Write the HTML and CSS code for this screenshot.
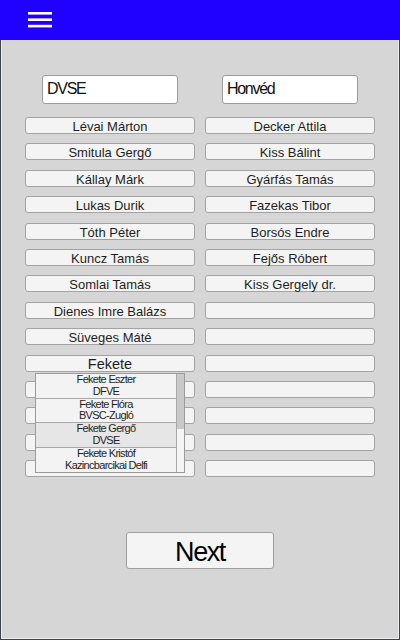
FILE: index.html
```html
<!DOCTYPE html>
<html lang="hu">
<head>
<meta charset="utf-8">
<link rel="stylesheet" href="styles.css">
</head>
<body>
<div class="app">
  <header class="topbar">
    <svg class="burger" width="24" height="16" viewBox="0 0 24 16"><rect x="0" y="0" width="24" height="2.6" fill="#fff"/><rect x="0" y="6.4" width="24" height="2.6" fill="#fff"/><rect x="0" y="12.8" width="24" height="2.6" fill="#fff"/></svg>
  </header>
  <main class="panel">
    <div class="teams">
      <div class="team">DVSE</div>
      <div class="team">Honvéd</div>
    </div>
    <div class="grid">
      <div class="cell">Lévai Márton</div><div class="cell">Decker Attila</div>
      <div class="cell">Smitula Gergő</div><div class="cell">Kiss Bálint</div>
      <div class="cell">Kállay Márk</div><div class="cell">Gyárfás Tamás</div>
      <div class="cell">Lukas Durik</div><div class="cell">Fazekas Tibor</div>
      <div class="cell">Tóth Péter</div><div class="cell">Borsós Endre</div>
      <div class="cell">Kuncz Tamás</div><div class="cell">Fejős Róbert</div>
      <div class="cell">Somlai Tamás</div><div class="cell">Kiss Gergely dr.</div>
      <div class="cell">Dienes Imre Balázs</div><div class="cell"></div>
      <div class="cell">Süveges Máté</div><div class="cell"></div>
      <div class="cell search">Fekete</div><div class="cell"></div>
      <div class="cell"></div><div class="cell"></div>
      <div class="cell"></div><div class="cell"></div>
      <div class="cell"></div><div class="cell"></div>
      <div class="cell"></div><div class="cell"></div>
    </div>
    <div class="dropdown">
      <div class="items">
        <div class="item"><span>Fekete Eszter</span><span>DFVE</span></div>
        <div class="item"><span>Fekete Flóra</span><span>BVSC-Zugló</span></div>
        <div class="item hl"><span>Fekete Gergő</span><span>DVSE</span></div>
        <div class="item"><span>Fekete Kristóf</span><span>Kazincbarcikai Delfi</span></div>
      </div>
      <div class="scroll"><div class="thumb"></div></div>
    </div>
    <div class="actions">
      <button class="next">Next</button>
    </div>
  </main>
</div>
</body>
</html>
```
FILE: styles.css
```css
* { box-sizing: border-box; }
html, body { margin: 0; padding: 0; }
body {
  width: 400px;
  height: 640px;
  overflow: hidden;
  font-family: "Liberation Sans", Arial, sans-serif;
  background: #d6d6d6;
}
.app { display: flex; flex-direction: column; height: 640px; }
.topbar {
  height: 40px;
  background: #2000ff;
  padding: 12px 0 0 28px;
  flex: none;
}
.burger { display: block; }
.panel {
  position: relative;
  flex: 1;
  background: #d6d6d6;
  border: 1px solid #3d424c;
  border-top: none;
  box-shadow: inset 1px 0 0 #eceef2, inset -1px 0 0 #eceef2, inset 0 -1px 0 #eceef2;
  display: flex;
  flex-direction: column;
}
.teams {
  display: flex;
  gap: 44px;
  margin: 35px 0 0 41px;
}
.team {
  width: 136px;
  height: 29px;
  background: #fff;
  border: 1px solid #9b9b9b;
  border-radius: 3px;
  padding: 3px 0 0 4px;
  font-size: 16px;
  letter-spacing: -1.3px;
  color: #111;
  line-height: 20px;
}
.grid {
  display: grid;
  grid-template-columns: 170px 170px;
  grid-auto-rows: 17px;
  column-gap: 10px;
  row-gap: 9.4px;
  margin: 13px 0 0 24px;
}
.cell {
  background: #f4f4f4;
  border: 1px solid #a3a3a3;
  border-radius: 3px;
  font-size: 13px;
  line-height: 16px;
  padding-top: 1px;
  text-align: center;
  color: #1e1e1e;
}
.cell.search { font-size: 14.5px; line-height: 15px; padding-top: 1px; }
.dropdown {
  position: absolute;
  left: 34px;
  top: 333px;
  width: 150px;
  height: 100px;
  display: flex;
  border: 1px solid #9a9a9a;
  background: #f2f2f2;
}
.items { flex: 1; display: flex; flex-direction: column; }
.item {
  height: 25px;
  display: flex;
  flex-direction: column;
  align-items: center;
  justify-content: center;
  font-size: 11px;
  line-height: 11.5px;
  letter-spacing: -0.7px;
  color: #1e1e1e;
  background: #f3f3f3;
  border-bottom: 1px solid #a8a8a8;
}
.item:last-child { border-bottom: none; }
.item.hl { background: #e6e6e6; }
.scroll {
  width: 8px;
  background: #f4f4f4;
  border-left: 1px solid #a8a8a8;
}
.thumb { height: 55px; background: #c9c9c9; }
.actions {
  display: flex;
  justify-content: center;
  margin-top: 55px;
}
.next {
  width: 148px;
  height: 37px;
  background: #f4f4f4;
  border: 1px solid #9e9e9e;
  border-radius: 3px;
  font-family: "Liberation Sans", Arial, sans-serif;
  font-size: 27px;
  letter-spacing: -1.4px;
  color: #000;
  padding: 3px 0 0;
  line-height: 32px;
}
```
